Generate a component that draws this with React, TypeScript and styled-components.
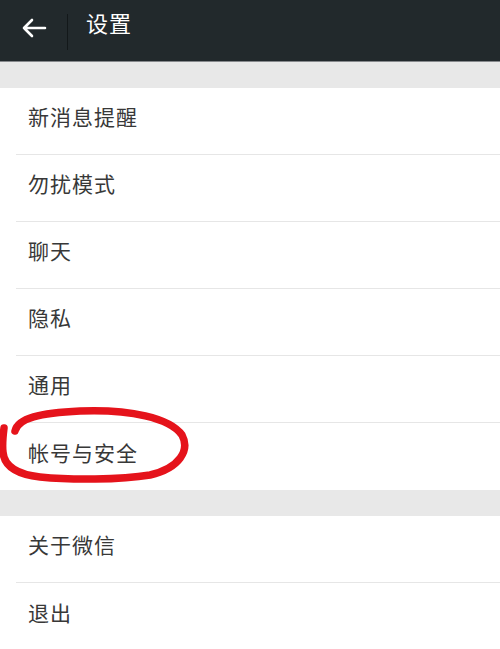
import React from 'react';
import styled, { createGlobalStyle } from 'styled-components';

const GlobalStyle = createGlobalStyle`
  html, body {
    margin: 0;
    padding: 0;
    background: #e8e8e8;
  }
  body {
    font-family: 'Noto Sans CJK SC', 'Noto Sans', sans-serif;
  }
`;

const Page = styled.div`
  width: 500px;
  min-height: 649px;
  background: #e8e8e8;
  overflow: hidden;
`;

const Header = styled.header`
  height: 61px;
  background: #22292c;
  border-bottom: 1px solid #86898c;
  display: flex;
  align-items: center;
`;

const BackButton = styled.button`
  width: 67px;
  height: 61px;
  padding: 0 0 5px 0;
  border: none;
  background: transparent;
  display: flex;
  align-items: center;
  justify-content: center;
  cursor: pointer;
`;

const HeaderDivider = styled.span`
  width: 1px;
  height: 36px;
  margin-top: 2px;
  background: #13181a;
`;

const Title = styled.h1`
  margin: 0 0 17px 18px;
  font-size: 22px;
  font-weight: 400;
  letter-spacing: 1px;
  color: #ffffff;
`;

const Group = styled.section`
  margin-top: ${({ $gap }: { $gap: number }) => $gap}px;
  background: #ffffff;
`;

const Row = styled.div<{ $last?: boolean }>`
  position: relative;
  height: ${({ $last }) => ($last ? 67 : 66)}px;
  display: flex;
  align-items: center;
  padding: 0 0 10px 28px;
  box-sizing: border-box;

  &::after {
    content: '';
    display: ${({ $last }) => ($last ? 'none' : 'block')};
    position: absolute;
    left: 16px;
    right: 0;
    bottom: -1px;
    height: 1px;
    background: #e6e6e6;
  }
  & + & {
    margin-top: 1px;
  }
`;

const Label = styled.span`
  font-size: 21px;
  letter-spacing: 1px;
  color: #383838;
`;

const Circle = styled.svg`
  position: absolute;
  left: 0;
  top: -23px;
  width: 200px;
  height: 90px;
  pointer-events: none;
  filter: blur(0.6px);
`;

const BackArrow = () => (
  <svg width="26" height="20" viewBox="0 0 26 20">
    <path
      d="M24 10 H3 M11 2 L3 10 L11 18"
      fill="none"
      stroke="#ffffff"
      strokeWidth="2.6"
      strokeLinecap="round"
      strokeLinejoin="round"
    />
  </svg>
);

const RedMark = () => (
  <Circle viewBox="0 0 200 90">
    <path
      d="M15 31 C18 18, 40 13, 80 11 C130 9, 170 18, 182 35 C190 50, 180 68, 150 75 C120 80, 70 80, 40 77 C15 74, 4 65, 3 52 C2 44, 3 36, 4 28"
      fill="none"
      stroke="#e5131b"
      strokeWidth="7.5"
      strokeLinecap="round"
    />
  </Circle>
);

const mainItems = ['新消息提醒', '勿扰模式', '聊天', '隐私', '通用', '帐号与安全'];
const otherItems = ['关于微信', '退出'];

export default function App() {
  return (
    <Page>
      <GlobalStyle />
      <Header>
        <BackButton aria-label="返回">
          <BackArrow />
        </BackButton>
        <HeaderDivider />
        <Title>设置</Title>
      </Header>

      <Group $gap={26}>
        {mainItems.map((item, i) => (
          <Row key={item} $last={i === mainItems.length - 1}>
            <Label>{item}</Label>
            {item === '帐号与安全' && <RedMark />}
          </Row>
        ))}
      </Group>

      <Group $gap={26}>
        {otherItems.map((item, i) => (
          <Row key={item} $last={i === otherItems.length - 1}>
            <Label>{item}</Label>
          </Row>
        ))}
      </Group>
    </Page>
  );
}
